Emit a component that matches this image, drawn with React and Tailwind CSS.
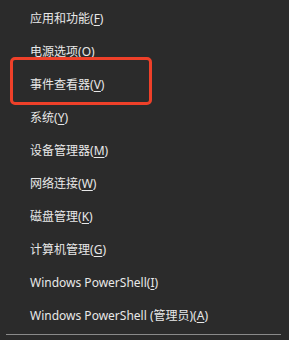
import React from 'react';

const items = [
    { label: '应用和功能', key: 'F' },
    { label: '电源选项', key: 'O' },
    { label: '事件查看器', key: 'V' },
    { label: '系统', key: 'Y' },
    { label: '设备管理器', key: 'M' },
    { label: '网络连接', key: 'W' },
    { label: '磁盘管理', key: 'K' },
    { label: '计算机管理', key: 'G' },
    { label: 'Windows PowerShell', key: 'I' },
    { label: 'Windows PowerShell (管理员)', key: 'A' },
];

const MenuItem = ({ label, accessKey }) => (
    <div className="h-[33px] flex items-center pl-[30px] text-[12px] text-[#e8e8e8] whitespace-nowrap">
        <span>{label}(<span className="underline underline-offset-2">{accessKey}</span>)</span>
    </div>
);

export default function App() {
    return (
        <div
            className="relative w-[289px] h-[340px] bg-[#2b2b2b] overflow-hidden pt-[2px]"
            style={{ fontFamily: '"Noto Sans", "Noto Sans CJK SC", sans-serif' }}
        >
            {items.map((item) => (
                <MenuItem key={item.key} label={item.label} accessKey={item.key} />
            ))}
            <div className="mt-[2px] mx-[6px] mr-[8px] h-px bg-[#8a8a8a]" />

            {/* red highlight around 事件查看器 */}
            <div className="absolute left-[10px] top-[57px] w-[142px] h-[48px] border-[3px] border-[#ee4029] rounded-[5px]" />
        </div>
    );
}
